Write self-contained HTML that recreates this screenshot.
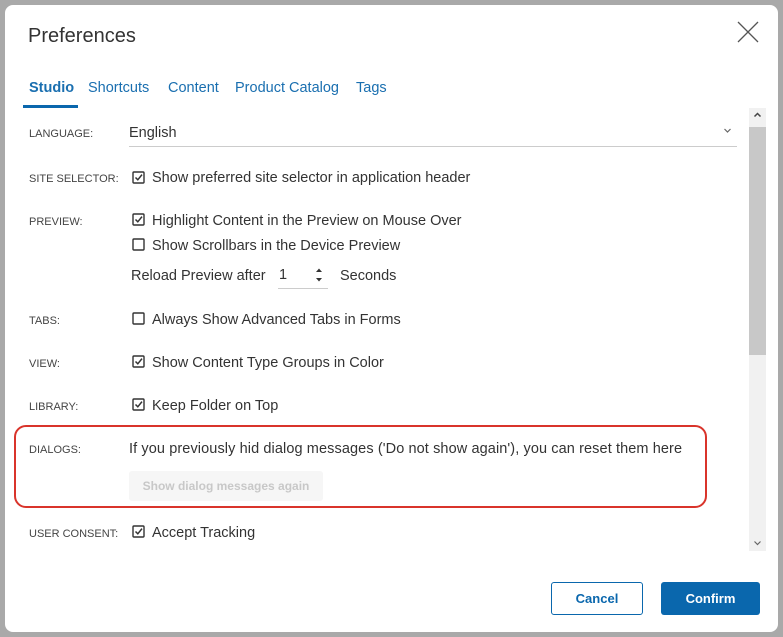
<!DOCTYPE html>
<html><head><style>
body{margin:0;width:783px;height:637px;background:#a9a9a9;font-family:"Liberation Sans",sans-serif;overflow:hidden;position:relative}
.dlg{position:absolute;left:5px;top:5px;width:773px;height:627px;background:#fff;border-radius:8px}
.t{position:absolute;white-space:nowrap}
.title{left:28px;top:25px;font-size:20px;color:#333}
.tab{top:80px;font-size:14.5px;color:#1a6fb0}
.lbl{font-size:11px;color:#444;left:29px}
.txt{font-size:14.5px;color:#333}
.cb{position:absolute}
.btn{position:absolute;top:582px;height:31px;border-radius:3px;font-size:13px;font-weight:bold;text-align:center;line-height:31px}
</style></head><body>
<div class="dlg"></div>
<div class="t title">Preferences</div>
<svg style="position:absolute;left:737px;top:21px" width="22" height="22"><path d="M1 1L21 21M21 1L1 21" stroke="#555" stroke-width="1.3"/></svg>
<div class="t tab" style="left:29px;font-weight:bold;color:#1a6fb0">Studio</div>
<div style="position:absolute;left:23px;top:105px;width:55px;height:3px;background:#0a67ad"></div>
<div class="t tab" style="left:88px">Shortcuts</div>
<div class="t tab" style="left:168px">Content</div>
<div class="t tab" style="left:235px">Product Catalog</div>
<div class="t tab" style="left:356px">Tags</div>

<div style="position:absolute;left:749px;top:108px;width:17px;height:443px;background:#f1f1f1"></div>
<div style="position:absolute;left:749px;top:127px;width:17px;height:228px;background:#c8c8c8"></div>
<svg style="position:absolute;left:752px;top:110px" width="11" height="10"><path d="M2.5 6.5L5.5 3.5L8.5 6.5" stroke="#444" stroke-width="1.5" fill="none"/></svg>
<svg style="position:absolute;left:752px;top:538px" width="11" height="10"><path d="M2.5 3.5L5.5 6.5L8.5 3.5" stroke="#666" stroke-width="1.2" fill="none"/></svg>

<div class="t lbl" style="top:128px">LANGUAGE:</div>
<div class="t txt" style="left:129px;top:125px">English</div>
<svg style="position:absolute;left:723px;top:127px" width="9" height="7"><path d="M1.5 2L4.5 5L7.5 2" stroke="#666" stroke-width="1.2" fill="none"/></svg>
<div style="position:absolute;left:129px;top:146px;width:608px;height:1px;background:#ccc"></div>

<svg width="0" height="0" style="position:absolute"><defs>
<g id="on"><rect x="1" y="1" width="11" height="11" rx="1" fill="none" stroke="#333" stroke-width="1.4"/><path d="M3.5 6.5L5.8 8.8L10 3.6" stroke="#333" stroke-width="1.5" fill="none"/></g>
<g id="off"><rect x="1" y="1" width="11" height="11" rx="1" fill="none" stroke="#333" stroke-width="1.4"/></g>
</defs></svg>

<div class="t lbl" style="top:173px">SITE SELECTOR:</div>
<svg class="cb" style="left:132px;top:171px" width="13" height="13"><use href="#on"/></svg>
<div class="t txt" style="left:152px;top:170px">Show preferred site selector in application header</div>

<div class="t lbl" style="top:216px">PREVIEW:</div>
<svg class="cb" style="left:132px;top:213px" width="13" height="13"><use href="#on"/></svg>
<div class="t txt" style="left:152px;top:213px">Highlight Content in the Preview on Mouse Over</div>
<svg class="cb" style="left:132px;top:238px" width="13" height="13"><use href="#off"/></svg>
<div class="t txt" style="left:152px;top:238px">Show Scrollbars in the Device Preview</div>
<div class="t txt" style="left:131px;top:268px">Reload Preview after</div>
<div class="t txt" style="left:279px;top:267px">1</div>
<svg style="position:absolute;left:314px;top:266px" width="10" height="18"><path d="M2 6L5 2.5L8 6Z M2 12L5 15.5L8 12Z" fill="#333"/></svg>
<div style="position:absolute;left:278px;top:288px;width:50px;height:1px;background:#ccc"></div>
<div class="t txt" style="left:340px;top:268px">Seconds</div>

<div class="t lbl" style="top:315px">TABS:</div>
<svg class="cb" style="left:132px;top:312px" width="13" height="13"><use href="#off"/></svg>
<div class="t txt" style="left:152px;top:312px">Always Show Advanced Tabs in Forms</div>

<div class="t lbl" style="top:358px">VIEW:</div>
<svg class="cb" style="left:132px;top:355px" width="13" height="13"><use href="#on"/></svg>
<div class="t txt" style="left:152px;top:355px">Show Content Type Groups in Color</div>

<div class="t lbl" style="top:401px">LIBRARY:</div>
<svg class="cb" style="left:132px;top:398px" width="13" height="13"><use href="#on"/></svg>
<div class="t txt" style="left:152px;top:398px">Keep Folder on Top</div>

<div style="position:absolute;left:14px;top:425px;width:689px;height:79px;border:2px solid #d9342b;border-radius:12px"></div>
<div class="t lbl" style="top:444px">DIALOGS:</div>
<div class="t txt" style="left:129px;top:441px;letter-spacing:0.1px">If you previously hid dialog messages ('Do not show again'), you can reset them here</div>
<div style="position:absolute;left:129px;top:471px;width:194px;height:30px;background:#f6f6f6;border-radius:3px;color:#c8c8c8;font-size:12px;font-weight:bold;text-align:center;line-height:30px">Show dialog messages again</div>

<div class="t lbl" style="top:528px">USER CONSENT:</div>
<svg class="cb" style="left:132px;top:525px" width="13" height="13"><use href="#on"/></svg>
<div class="t txt" style="left:152px;top:525px">Accept Tracking</div>

<div class="btn" style="left:551px;width:90px;border:1px solid #0a67ad;color:#0a67ad;background:#fff">Cancel</div>
<div class="btn" style="left:661px;width:99px;height:33px;line-height:33px;background:#0a67ad;color:#fff">Confirm</div>
</body></html>
